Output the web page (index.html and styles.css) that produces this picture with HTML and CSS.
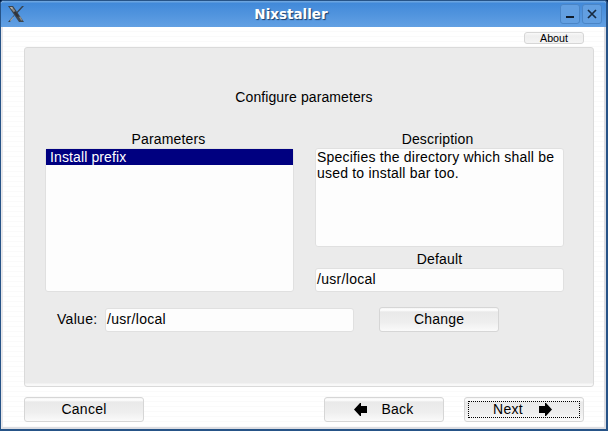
FILE: index.html
```html
<!DOCTYPE html>
<html lang="en">
<head>
<meta charset="utf-8">
<title>Nixstaller</title>
<link rel="stylesheet" href="styles.css">
</head>
<body>
<div class="window">
  <header class="titlebar">
    <svg class="logo" width="16" height="16" viewBox="0 0 16 16">
      <path d="M14 0h2L9.5 7 6.5 9 2 16H0L6 9z" fill="#39444f"/>
      <path d="M0 0h5l11 16h-5z" fill="#3c4650"/>
      <path d="M1.6 1h2.6l3 4-1.5 1zM11 11l1.5-.5 2 4H13z" fill="#8b8a86"/>
      <path d="M2 1h2l1 1.5-1.5.5zM2 14l3-3 .5.5L2.5 15z" fill="#b4aea4"/>
      <path d="M5.5 6h2.5l3 4-2 1z" fill="#303338"/>
    </svg>
    <h1 class="title">Nixstaller</h1>
    <div class="controls">
      <button class="control" aria-label="Minimize"><svg width="18" height="18" viewBox="0 0 18 18"><path d="M5 12h8" stroke="#101c2b" stroke-width="2"/></svg></button>
      <button class="control" aria-label="Close"><svg width="18" height="18" viewBox="0 0 18 18"><path d="M5 5l8 8M13 5l-8 8" stroke="#172a40" stroke-width="1.7"/></svg></button>
    </div>
  </header>
  <main class="content">
    <div class="top"><button class="button about"><span>About</span></button></div>
    <section class="panel">
      <h2 class="heading">Configure parameters</h2>
      <div class="columns">
        <div class="column">
          <div class="label parameters-label">Parameters</div>
          <div class="box list"><div class="item">Install prefix</div></div>
        </div>
        <div class="column">
          <div class="label description-label">Description</div>
          <div class="box description"><span class="line">Specifies the directory which shall be</span><span class="line">used to install bar too.</span></div>
          <div class="label default">Default</div>
          <div class="box field">/usr/local</div>
        </div>
      </div>
      <div class="value-row">
        <div class="value-label">Value:</div>
        <div class="box field">/usr/local</div>
        <button class="button change"><span>Change</span></button>
      </div>
    </section>
    <footer class="actions">
      <button class="button cancel"><span>Cancel</span></button>
      <button class="button back"><svg width="13" height="13" viewBox="0 0 13 13"><path d="M0 6.5L6 0h1v3h6v7H7v3H6z"/></svg><span>Back</span></button>
      <button class="button next"><span>Next</span><svg width="13" height="13" viewBox="0 0 13 13"><path d="M13 6.5L7 0H6v3H0v7h6v3h1z"/></svg></button>
    </footer>
  </main>
</div>
</body>
</html>
```
FILE: styles.css
```css
* { box-sizing: border-box; }
body { margin: 0; background: #00193f; font: 14px/16px "Liberation Sans", Arial, sans-serif; color: #000; }
button { font: inherit; color: inherit; padding: 0; margin: 0; letter-spacing: inherit; }
svg { display: block; flex: none; }
.window { width: 608px; height: 431px; display: flex; flex-direction: column; border: solid #265387; border-width: 1px 2px 2px 1px; border-radius: 4px 4px 0 0; overflow: hidden; background: #fff; }
.titlebar { height: 26px; flex: none; display: flex; align-items: center; padding: 0 4px 0 7px; background: linear-gradient(#6ca5e0 0, #6ca5e0 1px, #4189d9 2px, #62a0e3 26px); }
.title { flex: 1; margin: 0 0 0 -2px; text-align: center; color: #fff; font: bold 13.5px/24px "DejaVu Sans", sans-serif; text-shadow: 1px 1px 1px #173c68; }
.controls { display: flex; gap: 2px; }
.control { width: 20px; height: 20px; border: 1px solid #4a85c6; border-radius: 3px; background: #629fe1; }
.content { flex: 1; border: solid #dcdde2; border-width: 0 2px 2px; border-left-color: #e6e6ea; padding: 5px 0 0 21px; background: repeating-linear-gradient(#fff 0 4px, #fafafa 4px 5px); }
.top { width: 560px; display: flex; justify-content: flex-end; }
.button { display: flex; align-items: center; justify-content: center; width: 120px; height: 25px; border: 1px solid #d6d6d6; border-radius: 3px; background: linear-gradient(#f4f4f4 0, #fff 2px, #e9e9e9 4px, #eeeeee 14px, #fafafa 23px); }
.button:not(.about) span { margin-top: -2px; }
.about { width: 60px; height: 12px; font-size: 10.7px; line-height: 12px; background: linear-gradient(#f9f9f9, #eee 3px, #f4f4f4); }
.panel { width: 570px; height: 340px; margin-top: 3px; border: 1px solid #dadada; border-radius: 3px; background: linear-gradient(#ebebeb calc(100% - 3px), #f8f8f8 calc(100% - 2px)); padding: 41px 0 0 20px; }
.heading { width: 518px; margin: 0; font-size: 14px; font-weight: normal; line-height: 16px; text-align: center; letter-spacing: .1px; }
.columns { display: grid; grid-template-columns: 249px 249px; gap: 21px; margin-top: 26px; }
.label { height: 17px; text-align: center; letter-spacing: .15px; }
.parameters-label { padding-right: 2px; }
.box { border: 1px solid #e0e0e0; border-radius: 3px; background: #fdfdfd; }
.list { height: 144px; }
.item { height: 16px; padding-left: 4px; background: #000080; color: #fff; letter-spacing: .12px; }
.description-label { padding-right: 4px; }
.description { height: 99px; padding-left: 1px; letter-spacing: .2px; }
.line { display: block; white-space: nowrap; }
.default { height: 21px; padding-top: 4px; }
.field { width: 249px; height: 24px; padding: 1px 0 0 1px; line-height: 18px; letter-spacing: .3px; }
.value-row { display: flex; align-items: center; margin: 15px 0 0 12px; }
.value-label { width: 48px; margin-top: -2px; letter-spacing: .3px; }
.change { margin-left: 25px; letter-spacing: .2px; }
.actions { display: flex; width: 560px; margin-top: 10px; letter-spacing: .25px; }
.back { margin-left: auto; gap: 14px; }
.next { margin-left: 20px; gap: 16px; padding-right: 3px; outline: 1px dotted #000; outline-offset: -5px; }
```
